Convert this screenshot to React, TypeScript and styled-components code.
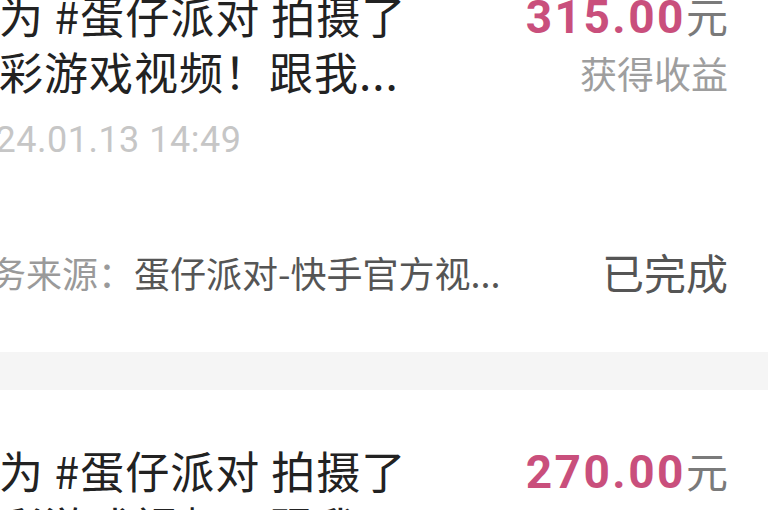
import React from "react";
import styled, { createGlobalStyle } from "styled-components";

const GlobalStyle = createGlobalStyle`
  html, body {
    margin: 0;
    padding: 0;
    background: #ffffff;
    overflow: hidden;
  }
  * {
    box-sizing: border-box;
  }
`;

const cjk = `"Noto Sans CJK SC", "Noto Sans", sans-serif`;
const num = `Roboto, "Noto Sans CJK SC", sans-serif`;

type Task = {
  title: [string, string];
  amount: string;
  time: string;
  source: string;
  status: string;
};

const tasks: Task[] = [
  {
    title: ["我为 #蛋仔派对 拍摄了", "精彩游戏视频！跟我..."],
    amount: "315.00",
    time: "2024.01.13 14:49",
    source: "蛋仔派对-快手官方视...",
    status: "已完成",
  },
  {
    title: ["我为 #蛋仔派对 拍摄了", "精彩游戏视频！跟我..."],
    amount: "270.00",
    time: "2024.01.12 20:31",
    source: "蛋仔派对-快手官方视...",
    status: "已完成",
  },
];

function TaskCard({ task }: { task: Task }) {
  return (
    <Card>
      <TopRow>
        <LeftCol>
          <Title>
            {task.title[0]}
            <br />
            {task.title[1]}
          </Title>
          <Time>{task.time}</Time>
        </LeftCol>
        <RightCol>
          <Amount>
            {task.amount}
            <Unit>元</Unit>
          </Amount>
          <AmountLabel>获得收益</AmountLabel>
        </RightCol>
      </TopRow>
      <SourceRow>
        <Source>
          <SourceLabel>任务来源：</SourceLabel>
          {task.source}
        </Source>
        <Status>{task.status}</Status>
      </SourceRow>
    </Card>
  );
}

export default function App() {
  return (
    <>
      <GlobalStyle />
      <Viewport>
        <List>
          {tasks.map((t, i) => (
            <TaskCard key={i} task={t} />
          ))}
        </List>
      </Viewport>
    </>
  );
}

// the screenshot is a crop of a scrolled list, so the list sits up and left
const Viewport = styled.div`
  width: 768px;
  height: 510px;
  overflow: hidden;
  background: #ffffff;
`;

const List = styled.div`
  width: 854px;
  margin-left: -86px;
  margin-top: -65px;
  display: flex;
  flex-direction: column;
  gap: 38px;
  background: #f5f5f5;
`;

const Card = styled.div`
  background: #ffffff;
  padding: 52px 40px 55px 40px;
  display: flex;
  flex-direction: column;
`;

const TopRow = styled.div`
  display: flex;
  justify-content: space-between;
  align-items: flex-start;
`;

const LeftCol = styled.div`
  display: flex;
  flex-direction: column;
`;

const Title = styled.div`
  font-family: ${cjk};
  font-size: 44px;
  line-height: 56px;
  letter-spacing: 1px;
  color: #222222;
  white-space: nowrap;
`;

const Time = styled.div`
  margin-top: 19px;
  font-family: ${num};
  font-size: 36px;
  line-height: 44px;
  color: #c6c6c6;
  letter-spacing: 0.5px;
`;

const RightCol = styled.div`
  display: flex;
  flex-direction: column;
  align-items: flex-end;
`;

const Amount = styled.div`
  font-family: ${num};
  font-weight: 700;
  font-size: 46px;
  line-height: 56px;
  color: #c94f7c;
  letter-spacing: 2.5px;
`;

const Unit = styled.span`
  font-family: ${cjk};
  font-weight: 400;
  font-size: 42px;
  letter-spacing: 0;
  color: #7a7a7a;
`;

const AmountLabel = styled.div`
  font-family: ${cjk};
  font-size: 37px;
  line-height: 56px;
  color: #9e9e9e;
`;

const SourceRow = styled.div`
  margin-top: 85px;
  display: flex;
  justify-content: space-between;
  align-items: center;
  height: 50px;
`;

const Source = styled.div`
  font-family: ${cjk};
  font-size: 36px;
  line-height: 50px;
  color: #555555;
  white-space: nowrap;
`;

const SourceLabel = styled.span`
  color: #9a9a9a;
`;

const Status = styled.div`
  font-family: ${cjk};
  font-size: 42px;
  line-height: 50px;
  color: #555555;
`;
